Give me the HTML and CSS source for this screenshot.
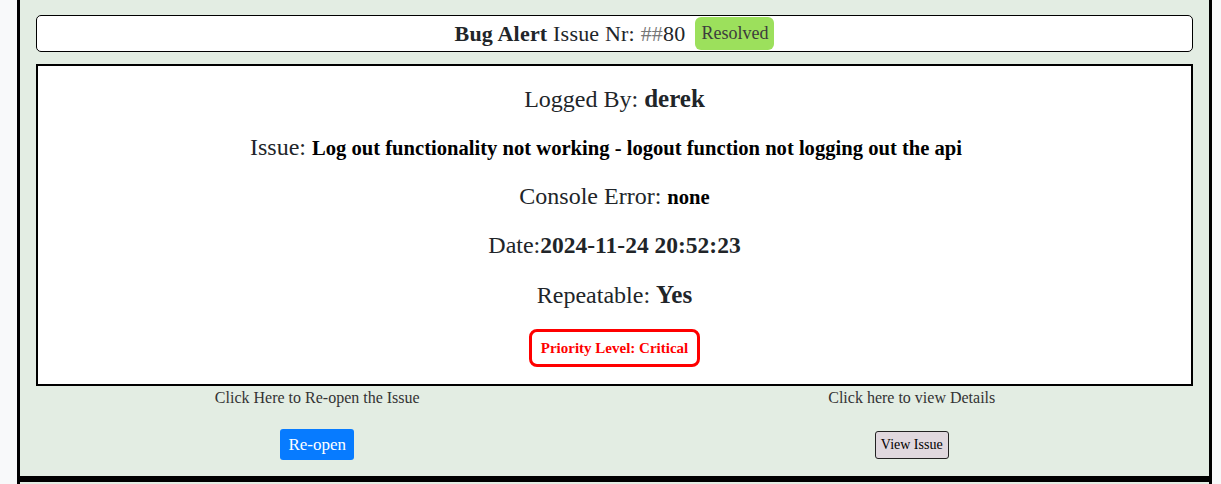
FILE: index.html
```html
<!DOCTYPE html>
<html lang="en">
<head>
<meta charset="utf-8">
<title>Bug Alert</title>
<link rel="stylesheet" href="styles.css">
</head>
<body>
<div class="list">
  <div class="card first">
    <div class="title-box">
      <span class="title-text"><b>Bug Alert</b> Issue Nr: <span class="hash">##</span>80</span>
      <span class="badge">Resolved</span>
    </div>
    <div class="detail">
      <div class="row">Logged By: <b>derek</b></div>
      <div class="row issue">Issue: <b class="small">Log out functionality not working - logout function not logging out the api</b></div>
      <div class="row">Console Error: <b class="small">none</b></div>
      <div class="row">Date:<b class="date">2024-11-24 20:52:23</b></div>
      <div class="row">Repeatable: <b>Yes</b></div>
      <div class="priority">Priority Level: Critical</div>
    </div>
    <div class="actions">
      <div class="col">
        <p class="hint">Click Here to Re-open the Issue</p>
        <div class="btn-row"><button class="btn-primary">Re-open</button></div>
      </div>
      <div class="col">
        <p class="hint">Click here to view Details</p>
        <div class="btn-row"><button class="btn-plain">View Issue</button></div>
      </div>
    </div>
  </div>
  <div class="card next"></div>
</div>
</body>
</html>
```
FILE: styles.css
```css
html, body {
  margin: 0;
  padding: 0;
}
body {
  background: #f8f9fa;
  font-family: "Liberation Serif", "DejaVu Serif", serif;
  color: #212529;
  overflow: hidden;
  height: 484px;
}
.list {
  margin: 0 9px 0 17px;
}
.card {
  background: #e3ede3;
  border: 3px solid #000;
}
.card.first {
  margin-top: -3px;
  padding: 15px 16px 16px;
}
.card.next {
  height: 40px;
  border-top-width: 3px;
}
.title-box {
  background: #fff;
  border: 1px solid #000;
  border-radius: 5px;
  height: 35px;
  display: flex;
  align-items: center;
  justify-content: center;
  gap: 10px;
}
.title-text {
  font-size: 22px;
  letter-spacing: 0.2px;
}
.hash {
  color: #777;
}
.badge {
  background: #9ce05c;
  color: #3c3c3c;
  border-radius: 6px;
  font-size: 18px;
  height: 33px;
  padding: 0 6px;
  display: flex;
  align-items: center;
}
.detail {
  margin-top: 12px;
  background: #fff;
  border: 2px solid #000;
  padding: 18px 0 17px;
  display: flex;
  flex-direction: column;
  align-items: center;
  gap: 20px;
}
.row {
  font-size: 24px;
  line-height: 29px;
  height: 29px;
  white-space: nowrap;
}
.row.issue {
  margin-right: 17px;
}
.row b {
  font-size: 25px;
  color: #212529;
}
.row b.small {
  font-size: 20.6px;
  color: #000;
}
.row b.date {
  font-size: 23.5px;
}
.priority {
  border: 3px solid #f00;
  border-radius: 8px;
  color: #f00;
  font-weight: bold;
  font-size: 15px;
  height: 32px;
  padding: 0 9px;
  display: flex;
  align-items: center;
}
.actions {
  display: grid;
  grid-template-columns: 1fr 1fr;
  margin: 2px -16px 0;
}
.col {
  display: flex;
  flex-direction: column;
  align-items: center;
}
.hint {
  margin: 0;
  font-size: 16px;
  line-height: 19px;
  color: #333;
}
.btn-row {
  margin-top: 22px;
  height: 31px;
  display: flex;
  align-items: center;
}
.btn-primary {
  font-family: inherit;
  background: #077bff;
  color: #fff;
  border: none;
  border-radius: 3px;
  font-size: 17px;
  height: 31px;
  padding: 0 8px;
}
.btn-plain {
  font-family: inherit;
  background: #e0d8de;
  color: #000;
  border: 1px solid #222;
  border-radius: 3px;
  font-size: 14px;
  height: 28px;
  padding: 0 5px;
}
```
